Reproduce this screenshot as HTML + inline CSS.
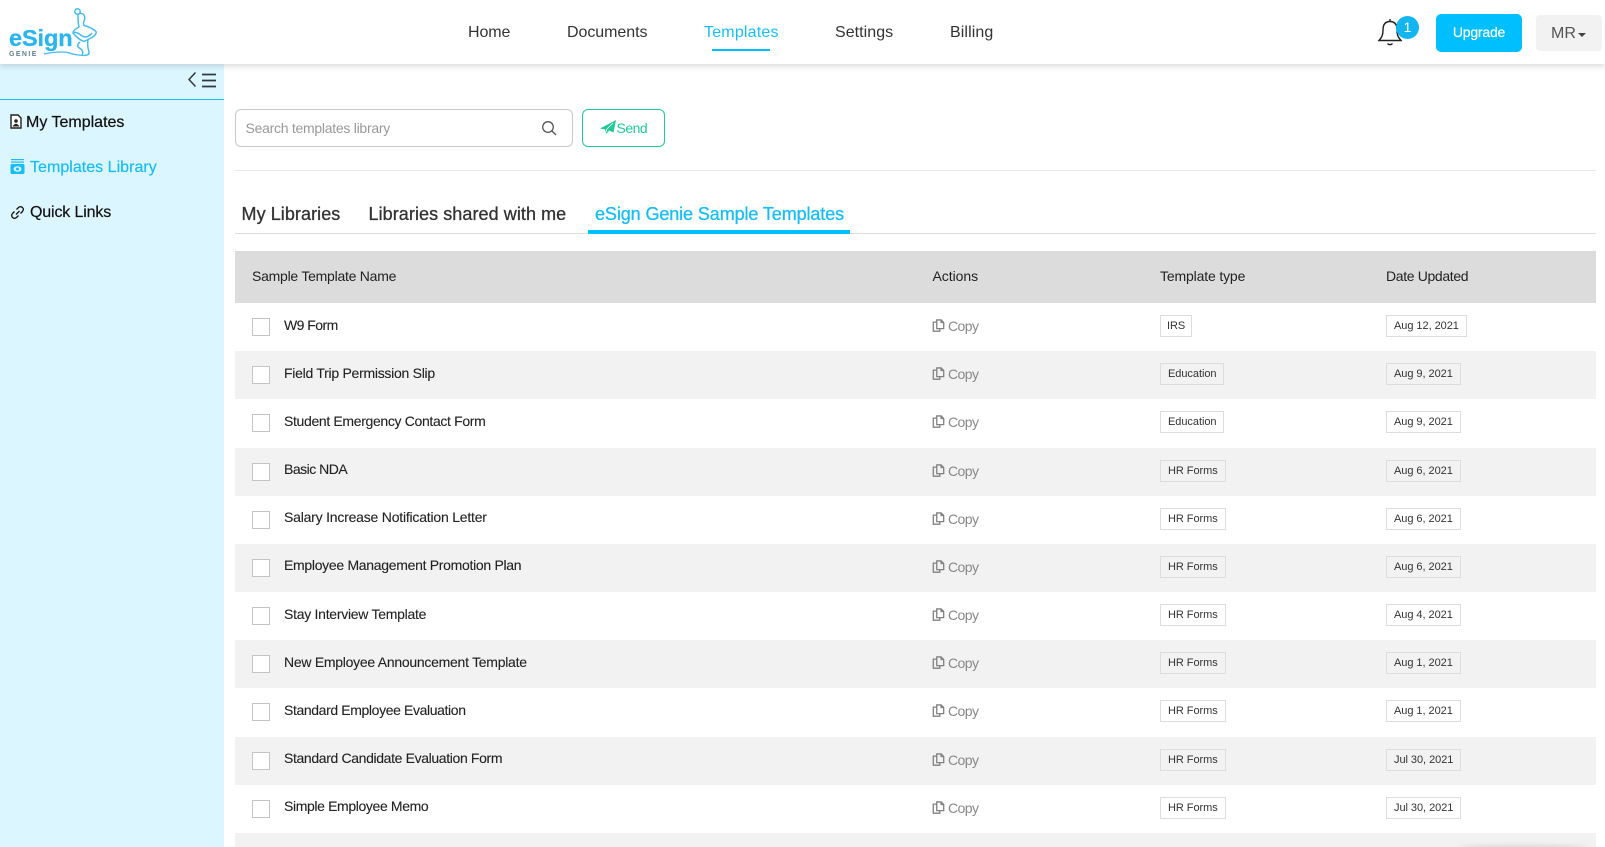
<!DOCTYPE html>
<html><head><meta charset="utf-8"><title>Templates</title>
<style>
*{box-sizing:border-box}
html,body{margin:0;padding:0;width:1605px;height:847px;overflow:hidden;background:#fff;font-family:"Liberation Sans",sans-serif;color:#222}
#w{position:relative;width:1605px;height:847px;overflow:hidden;background:#fff}
.a{position:absolute;white-space:nowrap}
.nav{top:23px;font-size:16px;line-height:20px;color:#333}
.side{font-size:16px;line-height:20px;color:#111;-webkit-text-stroke:.2px currentColor}
.tab{top:203px;font-size:18px;line-height:22px;color:#333;-webkit-text-stroke:.3px currentColor;letter-spacing:.07px}
.th{top:266px;font-size:14px;line-height:20px;color:#222}
.r{position:absolute;left:235px;width:1361px;height:48.2px}
.g{background:#f2f2f2}
.cb{position:absolute;left:17px;top:15px;width:18px;height:18px;border:1px solid #c4c4c4;background:#fff}
.n{position:absolute;left:49px;top:11.5px;font-size:14px;line-height:20px;color:#222;white-space:nowrap;letter-spacing:-.27px;-webkit-text-stroke:.1px #222}
.ic{position:absolute;left:697px;top:16px}
.c{position:absolute;left:713px;top:13px;font-size:14px;line-height:20px;color:#888;letter-spacing:-.55px}
.b{position:absolute;top:12px;height:22px;border:1px solid #ddd;font-size:11px;line-height:20px;padding:0 7px;color:#333;white-space:nowrap;letter-spacing:-.05px}
.t{left:925px}.d{left:1151px}
</style></head><body><div id="w">
<svg width="0" height="0" style="position:absolute"><defs><g id="cp" fill="none" stroke="#808080" stroke-width="1.500"><path d="M5.500 1H10.500L13.500 4V11H5.500Z"/><path d="M10.500 1V4H13.500"/><path d="M5.500 3.500H1.500V14H9V11"/></g></defs></svg>

<div class="a" style="left:0;top:0;width:1605px;height:64px;background:#fff;box-shadow:0 2px 6px rgba(0,0,0,.16);z-index:3"></div>
<div style="position:absolute;z-index:4;left:0;top:0;width:1605px;height:64px">
<svg class="a" style="left:8px;top:8px" width="92" height="52" viewBox="0 0 92 52" fill="none" stroke="#45bcec" stroke-width="1.500"><circle cx="69.500" cy="3.500" r="2.700"/><path d="M70 6.500Q72 4.500 75 6Q78 9 76 13Q75 15 76 17.500Q83 19 88 23.500Q89 26 84 29.500L76 33.500Q71 32 65 25Q65 22 71 19Q70 15 70 11Z"/><path d="M65 25Q68 23 74 28Q79 31 84 25M72 34Q67 38 73 41Q76 44 74 47M80 31Q79 38 81 44Q82 47 76 47.500"/><path d="M36 46Q50 43 60 44.500Q66 47 76 47.500" stroke-width="1.300"/><text x="1" y="38" font-family="Liberation Sans" font-size="23.500" font-weight="700" fill="#2bb5ee" stroke="#2bb5ee" stroke-width=".3" letter-spacing="-.1">eSign</text><text x="1" y="48" font-family="Liberation Sans" font-size="7" font-weight="700" fill="#5f7f90" stroke="none" letter-spacing="1.400">GENIE</text></svg>
<span class="a nav" style="left:468px;letter-spacing:-.1px">Home</span>
<span class="a nav" style="left:567px;letter-spacing:-.05px">Documents</span>
<span class="a nav" style="left:704px;color:#18bdf5;letter-spacing:.2px">Templates</span>
<div class="a" style="left:712px;top:49px;width:58px;height:2px;background:#00bfff"></div>
<span class="a nav" style="left:835px;letter-spacing:.05px">Settings</span>
<span class="a nav" style="left:950px;letter-spacing:.1px">Billing</span>
<svg class="a" style="left:1377px;top:17px" width="26" height="30" viewBox="0 0 26 30" fill="none" stroke="#222" stroke-width="1.400"><path d="M13 2V4.500M13 4.500C8 4.500 6 8 6 13C6 18 5 20 2 23.500H24C21 20 20 18 20 13C20 8 18 4.500 13 4.500Z"/><path d="M10.500 26.500Q13 29 15.500 26.500"/></svg>
<div class="a" style="left:1396px;top:16px;width:23px;height:23px;border-radius:50%;background:#12b5ee;color:#fff;font-size:14px;line-height:23px;text-align:center">1</div>
<div class="a" style="left:1436px;top:14px;width:86px;height:38px;border-radius:5px;background:#00bfff;color:#fff;font-size:14px;line-height:36px;text-align:center;-webkit-text-stroke:.2px #fff;letter-spacing:-.2px">Upgrade</div>
<div class="a" style="left:1536px;top:15px;width:66px;height:36px;border-radius:4px;background:#f2f2f2;color:#555;font-size:16px;line-height:38px;padding-left:15px">MR<span style="display:inline-block;width:0;height:0;border:4.500px solid transparent;border-top-color:#444;border-bottom:0;margin-left:2px;vertical-align:1px"></span></div>
</div>

<div class="a" style="left:0;top:64px;width:224px;height:783px;background:#dcf6ff"></div>
<div class="a" style="left:0;top:99px;width:224px;height:1px;background:#18bdf5"></div>
<svg class="a" style="left:186px;top:69px" width="34" height="22" viewBox="0 0 34 22" fill="none" stroke="#2f3a40"><path d="M9.500 3.500L3 10.500L9.500 17.500" stroke-width="1.500"/><path d="M16 5.500H30M16 11.500H30M16 17.500H30" stroke-width="1.700"/></svg>
<svg class="a" style="left:10px;top:114px" width="12" height="15" viewBox="0 0 12 15"><path d="M1 1H8L11 4V14H1Z" fill="#fff" stroke="#222" stroke-width="1.400"/><circle cx="6" cy="7" r="1.800" fill="#222"/><path d="M2.500 12.500Q6 7 9.500 12.500Z" fill="#222"/></svg>
<span class="a side" style="left:26px;top:113px">My Templates</span>
<svg class="a" style="left:10px;top:159px" width="15" height="16" viewBox="0 0 15 16" fill="#18bdf5"><rect x="1" y="0" width="13" height="1.200"/><rect x="1" y="2.500" width="13" height="1.200"/><rect x="0.500" y="5" width="14" height="10" rx="1.500"/><ellipse cx="7.500" cy="10" rx="4" ry="2.800" fill="#dcf6ff"/><circle cx="7.500" cy="10" r="1.500"/></svg>
<span class="a side" style="left:30px;top:158px;color:#18bdf5;letter-spacing:.03px">Templates Library</span>
<svg class="a" style="left:10px;top:205px" width="15" height="15" viewBox="0 0 15 15" fill="none" stroke="#111" stroke-width="1.300"><path d="M6 9.500L9.500 6M6.500 4.500L8.500 2.500Q10.500 .8 12.500 2.500Q14.200 4.500 12.500 6.500L10.500 8.500M8.500 10.500L6.500 12.500Q4.500 14.200 2.500 12.500Q.8 10.500 2.500 8.500L4.500 6.500"/></svg>
<span class="a side" style="left:30px;top:203px;letter-spacing:-.15px">Quick Links</span>

<div class="a" style="left:235px;top:109px;width:338px;height:38px;border:1px solid #c9c9c9;border-radius:6px;background:#fff"></div>
<span class="a" style="left:245.500px;top:118px;font-size:14px;line-height:20px;color:#999;letter-spacing:-.27px">Search templates library</span>
<svg class="a" style="left:600px;top:120px" width="16" height="14" viewBox="0 0 16 14" fill="#20c997"><path d="M16 0L0 8.500L5 9.500L6.500 14L9 10.500L13.500 12.500Z" fill="#20c997"/><path d="M13 3L6.500 9.500L6.800 12" stroke="#fff" stroke-width=".8" fill="none"/></svg>
<svg class="a" style="left:541px;top:120px" width="17" height="17" viewBox="0 0 17 17" fill="none" stroke="#555" stroke-width="1.300"><circle cx="7" cy="7" r="5.300"/><path d="M11 11L15 15"/></svg>
<div class="a" style="left:582px;top:109px;width:83px;height:38px;border:1px solid #20c997;border-radius:6px"></div>
<span class="a" style="left:616.500px;top:118px;font-size:14px;line-height:20px;color:#20c997;letter-spacing:-.5px">Send</span>
<div class="a" style="left:235px;top:170px;width:1361px;height:1px;background:#e8e8e8"></div>

<span class="a tab" style="left:241.500px">My Libraries</span>
<span class="a tab" style="left:368.500px">Libraries shared with me</span>
<span class="a tab" style="left:595px;color:#18bdf5;letter-spacing:-.1px">eSign Genie Sample Templates</span>
<div class="a" style="left:235px;top:233px;width:1361px;height:1px;background:#ddd"></div>
<div class="a" style="left:588px;top:230px;width:262px;height:3.500px;background:#00bfff"></div>

<div class="a" style="left:235px;top:251px;width:1361px;height:52px;background:#dcdcdc"></div>
<span class="a th" style="left:252px;letter-spacing:-.25px">Sample Template Name</span>
<span class="a th" style="left:932.500px;letter-spacing:-.05px">Actions</span>
<span class="a th" style="left:1160px;letter-spacing:-.15px">Template type</span>
<span class="a th" style="left:1386px;letter-spacing:-.35px">Date Updated</span>

<div class="r" style="top:303px"><div class="cb"></div><span class="n" style="letter-spacing:-.55px">W9 Form</span><svg class="ic" width="13" height="14" viewBox="0 0 15 16"><use href="#cp"/></svg><span class="c">Copy</span><span class="b t" style="padding:0 6px">IRS</span><span class="b d">Aug 12, 2021</span></div>
<div class="r g" style="top:351px"><div class="cb"></div><span class="n">Field Trip Permission Slip</span><svg class="ic" width="13" height="14" viewBox="0 0 15 16"><use href="#cp"/></svg><span class="c">Copy</span><span class="b t">Education</span><span class="b d">Aug 9, 2021</span></div>
<div class="r" style="top:399.400px"><div class="cb"></div><span class="n" style="letter-spacing:-.34px">Student Emergency Contact Form</span><svg class="ic" width="13" height="14" viewBox="0 0 15 16"><use href="#cp"/></svg><span class="c">Copy</span><span class="b t">Education</span><span class="b d">Aug 9, 2021</span></div>
<div class="r g" style="top:447.500px"><div class="cb"></div><span class="n" style="letter-spacing:-.49px">Basic NDA</span><svg class="ic" width="13" height="14" viewBox="0 0 15 16"><use href="#cp"/></svg><span class="c">Copy</span><span class="b t">HR Forms</span><span class="b d">Aug 6, 2021</span></div>
<div class="r" style="top:495.700px"><div class="cb"></div><span class="n" style="letter-spacing:-.21px">Salary Increase Notification Letter</span><svg class="ic" width="13" height="14" viewBox="0 0 15 16"><use href="#cp"/></svg><span class="c">Copy</span><span class="b t">HR Forms</span><span class="b d">Aug 6, 2021</span></div>
<div class="r g" style="top:543.900px"><div class="cb"></div><span class="n" style="letter-spacing:-.3px">Employee Management Promotion Plan</span><svg class="ic" width="13" height="14" viewBox="0 0 15 16"><use href="#cp"/></svg><span class="c">Copy</span><span class="b t">HR Forms</span><span class="b d">Aug 6, 2021</span></div>
<div class="r" style="top:592px"><div class="cb"></div><span class="n">Stay Interview Template</span><svg class="ic" width="13" height="14" viewBox="0 0 15 16"><use href="#cp"/></svg><span class="c">Copy</span><span class="b t">HR Forms</span><span class="b d">Aug 4, 2021</span></div>
<div class="r g" style="top:640.200px"><div class="cb"></div><span class="n">New Employee Announcement Template</span><svg class="ic" width="13" height="14" viewBox="0 0 15 16"><use href="#cp"/></svg><span class="c">Copy</span><span class="b t">HR Forms</span><span class="b d">Aug 1, 2021</span></div>
<div class="r" style="top:688.400px"><div class="cb"></div><span class="n" style="letter-spacing:-.38px">Standard Employee Evaluation</span><svg class="ic" width="13" height="14" viewBox="0 0 15 16"><use href="#cp"/></svg><span class="c">Copy</span><span class="b t">HR Forms</span><span class="b d">Aug 1, 2021</span></div>
<div class="r g" style="top:736.600px"><div class="cb"></div><span class="n" style="letter-spacing:-.36px">Standard Candidate Evaluation Form</span><svg class="ic" width="13" height="14" viewBox="0 0 15 16"><use href="#cp"/></svg><span class="c">Copy</span><span class="b t">HR Forms</span><span class="b d">Jul 30, 2021</span></div>
<div class="r" style="top:784.700px"><div class="cb"></div><span class="n" style="letter-spacing:-.37px">Simple Employee Memo</span><svg class="ic" width="13" height="14" viewBox="0 0 15 16"><use href="#cp"/></svg><span class="c">Copy</span><span class="b t">HR Forms</span><span class="b d">Jul 30, 2021</span></div>
<div class="r g" style="top:833px"></div>
<div class="a" style="left:1458px;top:846px;width:130px;height:4px;background:#e0e0e0;border-radius:50%;box-shadow:0 0 5px 1px rgba(0,0,0,.1)"></div>
</div></body></html>
